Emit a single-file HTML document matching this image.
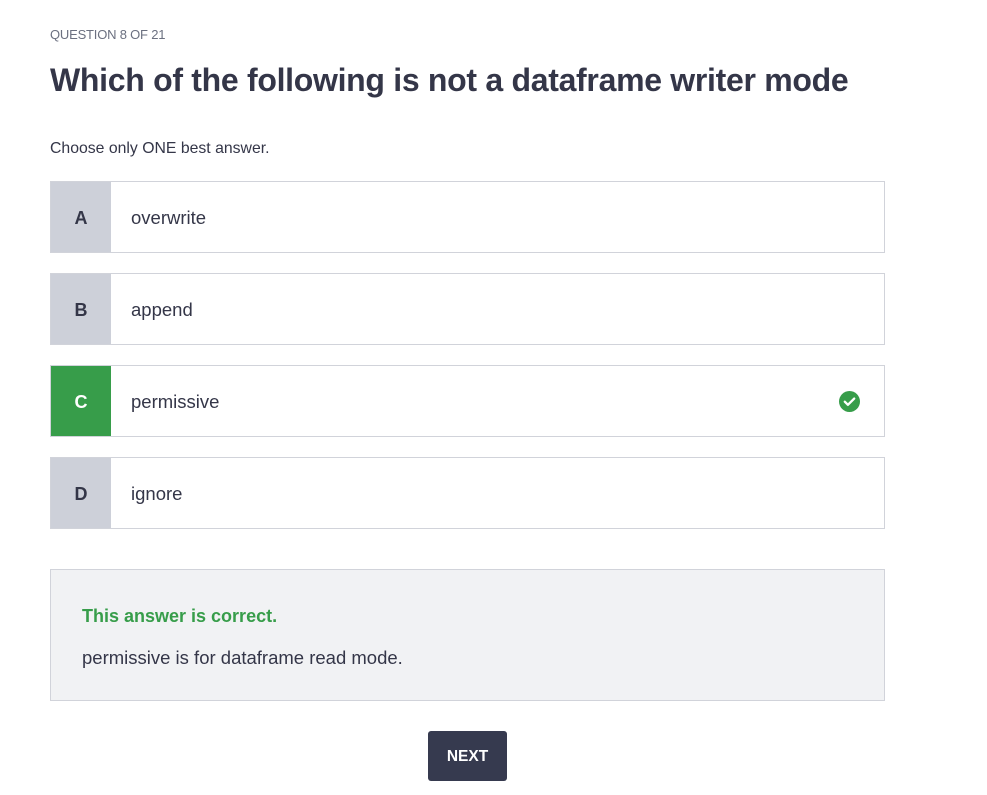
<!DOCTYPE html>
<html><head><style>
body{margin:0;background:#fff;font-family:"Liberation Sans",sans-serif;color:#343a4d;}
.q{position:absolute;left:50px;top:27px;font-size:13px;color:#6b7080;letter-spacing:-0.2px}
h1{position:absolute;left:50px;top:62px;margin:0;font-size:32px;font-weight:bold;letter-spacing:-0.3px;color:#343648}
.c{position:absolute;left:50px;top:140px;font-size:15.8px;color:#343648}
.opt{position:absolute;left:50px;width:833px;height:70px;border:1px solid #d1d3da;background:#fff}
.opt .l{position:absolute;left:0;top:0;width:60px;height:70px;background:#cdd0d9;font-weight:bold;font-size:18px;text-align:center;line-height:72px;color:#343648}
.opt .t{position:absolute;left:80px;top:0;line-height:72px;font-size:18.5px;color:#343648}
.fb{position:absolute;left:50px;top:569px;width:833px;height:130px;border:1px solid #d1d3da;background:#f1f2f4}
.btn{position:absolute;left:428px;top:731px;width:79px;height:50px;background:#363a4f;border-radius:3px;color:#fff;font-weight:bold;font-size:15.5px;text-align:center;line-height:52px}
</style></head><body>
<div class="q">QUESTION 8 OF 21</div>
<h1>Which of the following is not a dataframe writer mode</h1>
<div class="c">Choose only ONE best answer.</div>
<div class="opt" style="top:181px"><div class="l">A</div><div class="t">overwrite</div></div>
<div class="opt" style="top:273px"><div class="l">B</div><div class="t">append</div></div>
<div class="opt" style="top:365px"><div class="l" style="background:#379d4a;color:#fff">C</div><div class="t">permissive</div>
<svg style="position:absolute;left:788px;top:25px" width="21" height="21" viewBox="0 0 20 20"><circle cx="10" cy="10" r="10" fill="#379d4a"/><path d="M5.5 10.2l3 3 6-6" stroke="#fff" stroke-width="2.2" fill="none" stroke-linecap="round" stroke-linejoin="round"/></svg></div>
<div class="opt" style="top:457px"><div class="l">D</div><div class="t">ignore</div></div>
<div class="fb">
<div style="position:absolute;left:31px;top:36px;font-size:18px;font-weight:bold;color:#379d4a">This answer is correct.</div>
<div style="position:absolute;left:31px;top:77px;font-size:18.5px;color:#343648">permissive is for dataframe read mode.</div>
</div>
<div class="btn">NEXT</div>
</body></html>
